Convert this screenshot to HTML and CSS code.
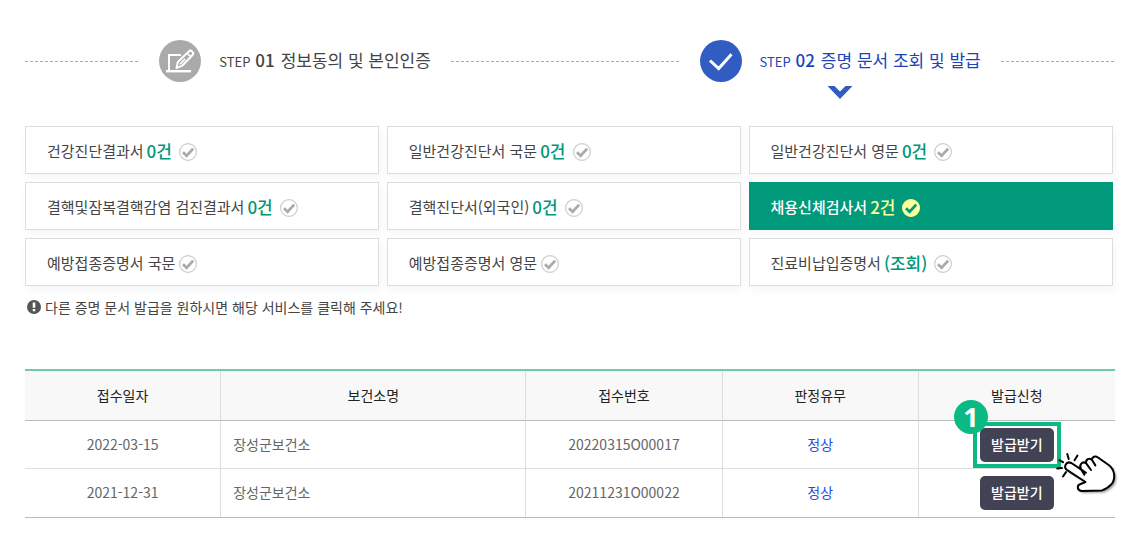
FILE: index.html
```html
<!DOCTYPE html>
<html lang="ko">
<head>
    <meta charset="UTF-8">
    <meta name="viewport" content="width=device-width, initial-scale=1.0">
    <title>증명 문서 조회 및 발급</title>
    <link rel="stylesheet" href="styles.css">
</head>
<body>
    <!-- Shared icon shapes -->
    <svg class="symbols" width="0" height="0" aria-hidden="true">
        <symbol id="tick" viewBox="0 0 18 18">
            <circle class="tick-ring" cx="9" cy="9" r="8.4"/>
            <path class="tick-mark" d="M4 9.2l3.6 3.5 6.6-7.1"/>
        </symbol>
    </svg>

    <div class="container">
        <!-- Progress steps -->
        <div class="steps">
            <span class="line"></span>
            <div class="step">
                <svg class="step-icon" viewBox="0 0 42 42" aria-hidden="true">
                    <circle cx="21" cy="21" r="21" fill="#aaaaaa"/>
                    <path d="M22 15H10v15" fill="none" stroke="#fff" stroke-width="2"/>
                    <path d="M7 31.2h25" stroke="#fff" stroke-width="2.4"/>
                    <path d="M17.5 28.2l1.3-6.2L29.6 11.6a2.6 2.6 0 0 1 3.7 3.7L23.2 25.7z" fill="#aaaaaa" stroke="#fff" stroke-width="2" stroke-linejoin="round"/>
                    <path d="M28.2 13.2l3.7 3.7M21 24.3l5.2-5.4" stroke="#fff" stroke-width="1.6"/>
                </svg>
                <span class="step-text"><span class="step-label">STEP</span> <strong>01</strong><span class="step-name">정보동의 및 본인인증</span></span>
            </div>
            <span class="line line-wide"></span>
            <div class="step active">
                <svg class="step-icon" viewBox="0 0 42 42" aria-hidden="true">
                    <circle cx="21" cy="21" r="21" fill="#315dc2"/>
                    <path d="M10 20.5l8.7 8L31.5 14.3" fill="none" stroke="#fff" stroke-width="3"/>
                </svg>
                <span class="step-text"><span class="step-label">STEP</span> <strong>02</strong><span class="step-name">증명 문서 조회 및 발급</span></span>
                <svg class="step-arrow" viewBox="0 0 25 13" aria-hidden="true">
                    <path d="M0 0h7l5.5 5.5L18 0h7L12.5 13z" fill="#315dc2"/>
                </svg>
            </div>
            <span class="line"></span>
        </div>

        <!-- Certificate types -->
        <div class="docs">
            <a class="doc" href="#">건강진단결과서<em>0건</em><svg class="tick"><use href="#tick"/></svg></a>
            <a class="doc" href="#">일반건강진단서 국문<em>0건</em><svg class="tick"><use href="#tick"/></svg></a>
            <a class="doc" href="#">일반건강진단서 영문<em>0건</em><svg class="tick"><use href="#tick"/></svg></a>
            <a class="doc" href="#">결핵및잠복결핵감염 검진결과서<em>0건</em><svg class="tick"><use href="#tick"/></svg></a>
            <a class="doc" href="#">결핵진단서(외국인)<em>0건</em><svg class="tick"><use href="#tick"/></svg></a>
            <a class="doc selected" href="#">채용신체검사서<em>2건</em><svg class="tick"><use href="#tick"/></svg></a>
            <a class="doc" href="#">예방접종증명서 국문<svg class="tick"><use href="#tick"/></svg></a>
            <a class="doc" href="#">예방접종증명서 영문<svg class="tick"><use href="#tick"/></svg></a>
            <a class="doc" href="#">진료비납입증명서<em>(조회)</em><svg class="tick"><use href="#tick"/></svg></a>
        </div>

        <p class="notice">
            <svg class="notice-icon" viewBox="0 0 14 14" aria-hidden="true">
                <circle cx="7" cy="7" r="7" fill="#555"/>
                <path d="M5.7 2.6h2.6v5.2H5.7zM5.7 9h2.6v2.2H5.7z" fill="#fff"/>
            </svg>
            다른 증명 문서 발급을 원하시면 해당 서비스를 클릭해 주세요!
        </p>

        <!-- Issue list -->
        <table class="list">
            <thead>
                <tr>
                    <th scope="col">접수일자</th>
                    <th scope="col" class="col-office">보건소명</th>
                    <th scope="col">접수번호</th>
                    <th scope="col">판정유무</th>
                    <th scope="col">발급신청</th>
                </tr>
            </thead>
            <tbody>
                <tr>
                    <td>2022-03-15</td>
                    <td class="office">장성군보건소</td>
                    <td>20220315O00017</td>
                    <td class="result">정상</td>
                    <td class="action">
                        <div class="issue">
                            <button type="button">발급받기</button>
                            <span class="frame"></span>
                            <span class="badge">1</span>
                            <svg class="hand" viewBox="0 0 60 46" aria-hidden="true">
                                <path d="M3.3 8.2L7 10.2M11.3 2l1.4 5M21.5 3.5l-3 4.7M1.3 16.6l4.7-.6M7 24.5l3-4.4" fill="none" stroke="#000" stroke-width="2" stroke-linecap="round"/>
                                <path class="hand-shadow" d="M29.5 30L11.2 18.2C6.8 14.8 10.3 8.6 15.3 11L25 17.3C22.6 12.6 26.4 8.7 30.2 11.3C29.4 7.6 33.2 5.2 36 8C36 4.8 39.2 3.4 42 5.5L53 13.2C58.8 17.7 60 26.6 55.5 32.2C52.8 35.2 49.6 37.4 46 38.4L26 39C20.8 38.7 20.6 33.3 24.6 32z"/>
                                <path d="M29.5 30L11.2 18.2C6.8 14.8 10.3 8.6 15.3 11L25 17.3C22.6 12.6 26.4 8.7 30.2 11.3C29.4 7.6 33.2 5.2 36 8C36 4.8 39.2 3.4 42 5.5L53 13.2C58.8 17.7 60 26.6 55.5 32.2C52.8 35.2 49.6 37.4 46 38.4L26 39C20.8 38.7 20.6 33.3 24.6 32zM25 17.3L28.4 22.6M22 15.4L30 20.8M30.2 11.3L35 18M36 8L39.4 13.4" fill="#fff" stroke="#000" stroke-width="2" stroke-linecap="round" stroke-linejoin="round"/>
                            </svg>
                        </div>
                    </td>
                </tr>
                <tr>
                    <td>2021-12-31</td>
                    <td class="office">장성군보건소</td>
                    <td>20211231O00022</td>
                    <td class="result">정상</td>
                    <td class="action">
                        <div class="issue">
                            <button type="button">발급받기</button>
                        </div>
                    </td>
                </tr>
            </tbody>
        </table>
    </div>
</body>
</html>
```

FILE: styles.css
```css
body {
    margin: 0;
    background-color: #fff;
    color: #444;
    font-family: "Noto Sans CJK KR", sans-serif;
    font-size: 14px;
}

.symbols {
    position: absolute;
}

.container {
    padding: 40px 9px 20px 25px;
}

/* Progress steps */
.steps {
    display: flex;
    align-items: center;
    gap: 20px;
    height: 42px;
}

.line {
    flex: 1;
    height: 1px;
    background: repeating-linear-gradient(to right, #aaa 0, #aaa 3px, transparent 3px, transparent 5px);
}

.line-wide {
    flex: 2;
}

.step {
    position: relative; /* For the arrow below the active step */
    display: flex;
    align-items: center;
    gap: 18px;
    white-space: nowrap;
}

.step.active {
    color: #1a44b8;
}

.step-icon {
    width: 42px;
    height: 42px;
}

.step-text {
    font-size: 17px;
    line-height: 24px;
}

.step-label {
    font-size: 13px;
}

.step-text strong {
    font-weight: 500;
}

.step-name {
    margin-left: 6px;
}

.step-arrow {
    position: absolute;
    top: 46px;
    left: 50%;
    width: 25px;
    height: 13px;
    transform: translateX(-50%);
}

/* Certificate types */
.docs {
    display: grid;
    grid-template-columns: 33fr 33fr 34fr;
    gap: 8px;
    margin: 44px 2px 0 0;
}

.doc {
    display: flex;
    align-items: center;
    box-sizing: border-box;
    height: 48px;
    padding: 0 21px;
    border: 1px solid #ddd;
    background-color: #fff;
    box-shadow: 2px 4px 8px rgba(60, 70, 100, 0.05);
    color: #444;
    font-size: 15px;
    text-decoration: none;
    white-space: nowrap;
}

.doc em {
    margin: 0 3px;
    color: #00967a;
    font-size: 17px;
    font-style: normal;
    font-weight: 500;
}

.tick {
    width: 18px;
    height: 18px;
    margin: 3px 0 0 4px;
    fill: none;
    stroke: #aaa;
}

.tick-ring {
    stroke: var(--ring, #ccc);
    stroke-width: 1.2;
}

.tick-mark {
    stroke-width: 2.8;
}

.doc.selected {
    border-color: #00997a;
    background-color: #00997a;
    color: #fff;
    font-weight: 500;
}

.doc.selected em {
    color: #ffff99;
}

.doc.selected .tick {
    --ring: #ffff99;
    fill: #ffff99;
    stroke: #00997a;
}

.doc.selected .tick-mark {
    fill: none;
}

.notice {
    display: flex;
    align-items: center;
    gap: 4px;
    margin: 11px 0 0 2px;
    line-height: 20px;
}

.notice-icon {
    width: 14px;
    height: 14px;
}

/* Issue list */
.list {
    width: 100%;
    margin-top: 52px;
    border-top: 2px solid #70c7b2;
    border-bottom: 1px solid #bbb;
    border-spacing: 0;
    table-layout: fixed;
}

.list th,
.list td {
    box-sizing: border-box;
    height: 48px;
    padding: 0 12px 2px;
    border-right: 1px solid #ddd;
    text-align: center;
}

.list th {
    width: 18%;
    height: 50px;
    border-bottom: 1px solid #bbb;
    background-color: #f8f8f8;
    color: #222;
    font-weight: 400;
}

.list .col-office {
    width: 28%;
}

.list td {
    color: #666;
}

.list tr:first-child td {
    border-bottom: 1px solid #ddd;
}

.list th:last-child,
.list td:last-child {
    border-right: 0;
}

.list .office {
    text-align: left;
}

.list .result {
    color: #1a50e0;
}

.list .action {
    padding-bottom: 0;
}

.issue {
    position: relative; /* For the click guide */
    width: 74px;
    margin: 0 auto;
}

.issue button {
    display: block;
    width: 100%;
    height: 34px;
    padding: 0 0 2px;
    border: 0;
    border-radius: 5px;
    background-color: #424255;
    color: #fff;
    font-family: inherit;
    font-size: 14px;
    font-weight: 500;
    cursor: pointer;
}

/* Click guide over the first button */
.frame {
    position: absolute;
    inset: -6px -7px;
    border: 4px solid #0ab983;
}

.badge {
    position: absolute;
    top: -28px;
    left: -26px;
    width: 34px;
    height: 34px;
    border-radius: 50%;
    background-color: #0ab983;
    color: #fff;
    font-family: "Open Sans", sans-serif;
    font-size: 27px;
    font-weight: 700;
    line-height: 34px;
    text-align: center;
}

.hand {
    position: absolute;
    top: 24px;
    left: 76px;
    width: 60px;
    height: 46px;
    overflow: visible;
}

.hand-shadow {
    fill: rgba(0, 0, 0, 0.4);
    filter: blur(1px);
    transform: translate(2px, 2px);
}
```
